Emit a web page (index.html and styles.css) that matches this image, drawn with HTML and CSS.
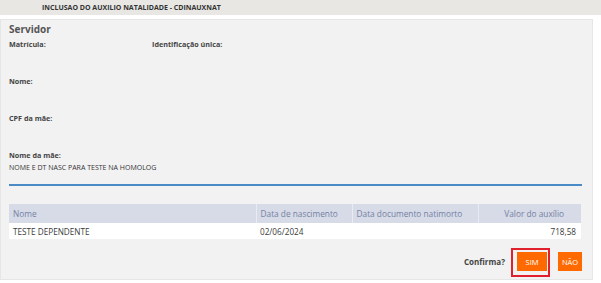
FILE: index.html
```html
<!DOCTYPE html>
<html lang="pt-BR">
<head>
<meta charset="utf-8">
<title>Inclusão do Auxílio Natalidade</title>
<link rel="stylesheet" href="styles.css">
</head>
<body>
<div class="topbar">INCLUSAO DO AUXILIO NATALIDADE - CDINAUXNAT</div>
<div class="panel">
  <div class="title">Servidor</div>
  <div class="row">
    <div class="field w1"><div class="label">Matrícula:</div><div class="value"></div></div>
    <div class="field"><div class="label">Identificação única:</div><div class="value"></div></div>
  </div>
  <div class="field"><div class="label">Nome:</div><div class="value"></div></div>
  <div class="field"><div class="label">CPF da mãe:</div><div class="value"></div></div>
  <div class="field last"><div class="label">Nome da mãe:</div><div class="value">NOME E DT NASC PARA TESTE NA HOMOLOG</div></div>
  <div class="rule"></div>
  <table class="grid">
    <thead>
      <tr>
        <th class="c1">Nome</th>
        <th class="c2">Data de nascimento</th>
        <th class="c3">Data documento natimorto</th>
        <th class="c4 num">Valor do auxílio</th>
      </tr>
    </thead>
    <tbody>
      <tr>
        <td>TESTE DEPENDENTE</td>
        <td>02/06/2024</td>
        <td></td>
        <td class="num">718,58</td>
      </tr>
    </tbody>
  </table>
  <div class="actions">
    <span class="ask">Confirma?</span>
    <span class="mark"><button class="btn sim">SIM</button></span>
    <button class="btn nao">NÃO</button>
  </div>
</div>
</body>
</html>
```
FILE: styles.css
```css
* { box-sizing: border-box; }
html, body { margin: 0; padding: 0; background: #ffffff; }
body { font-family: "Open Sans", "Liberation Sans", sans-serif; color: #333; }

.topbar {
  height: 15px;
  line-height: 15px;
  background: #e8e7e4;
  padding-left: 42px;
  font-size: 7px;
  font-weight: 700;
  color: #333;
}

.panel {
  margin-top: 4px;
  width: 593px;
  height: 261px;
  background: #f2f2f2;
  border: 1px solid #e6e6e6;
  padding: 2px 12px 0 8px;
}

.title {
  font-size: 10px;
  font-weight: 700;
  line-height: 14px;
  color: #555;
}

.row { display: flex; }
.w1 { width: 143px; }

.field { height: 37px; padding-top: 2px; }
.label {
  font-size: 7.2px;
  font-weight: 700;
  line-height: 12px;
  color: #444;
}
.value {
  font-size: 7px;
  line-height: 14px;
  color: #333;
}

.rule {
  height: 2px;
  background: #4a8bc6;
  width: 573px;
}

.grid {
  margin-top: 18px;
  width: 572px;
  border-collapse: collapse;
  font-size: 8.3px;
}
.grid th {
  background: #d7dae7;
  color: #7482a3;
  font-weight: 400;
  text-align: left;
  height: 19px;
  padding: 0 4px;
  border-left: 1px solid #e9ebf2;
}
.grid th:first-child { border-left: none; }
.grid td {
  background: #ffffff;
  color: #3a3a3a;
  font-size: 8.2px;
  height: 16px;
  padding: 0 4px;
}
.grid .c1 { width: 247px; }
.grid .c2 { width: 96px; }
.grid .c3 { width: 126px; }
.grid .num { text-align: right; padding-right: 5px; }
.grid th.num { padding-right: 17px; }

.actions {
  display: flex;
  justify-content: flex-end;
  align-items: center;
  margin-top: 13px;
  width: 573px;
}
.ask {
  font-size: 8px;
  font-weight: 700;
  color: #444;
  margin-right: 12px;
}
.mark { position: relative; display: inline-flex; margin-right: 11px; }
.mark::after {
  content: "";
  position: absolute;
  top: -4px;
  left: -6px;
  right: -3px;
  bottom: -6px;
  border: 2px solid #e0202c;
}
.btn {
  font-family: inherit;
  background: #ff6a00;
  color: #ffffff;
  border: none;
  height: 19px;
  padding: 0;
  font-size: 7.5px;
  margin: 0;
  text-align: center;
}
.sim { width: 30px; }
.nao { width: 24px; }
```
